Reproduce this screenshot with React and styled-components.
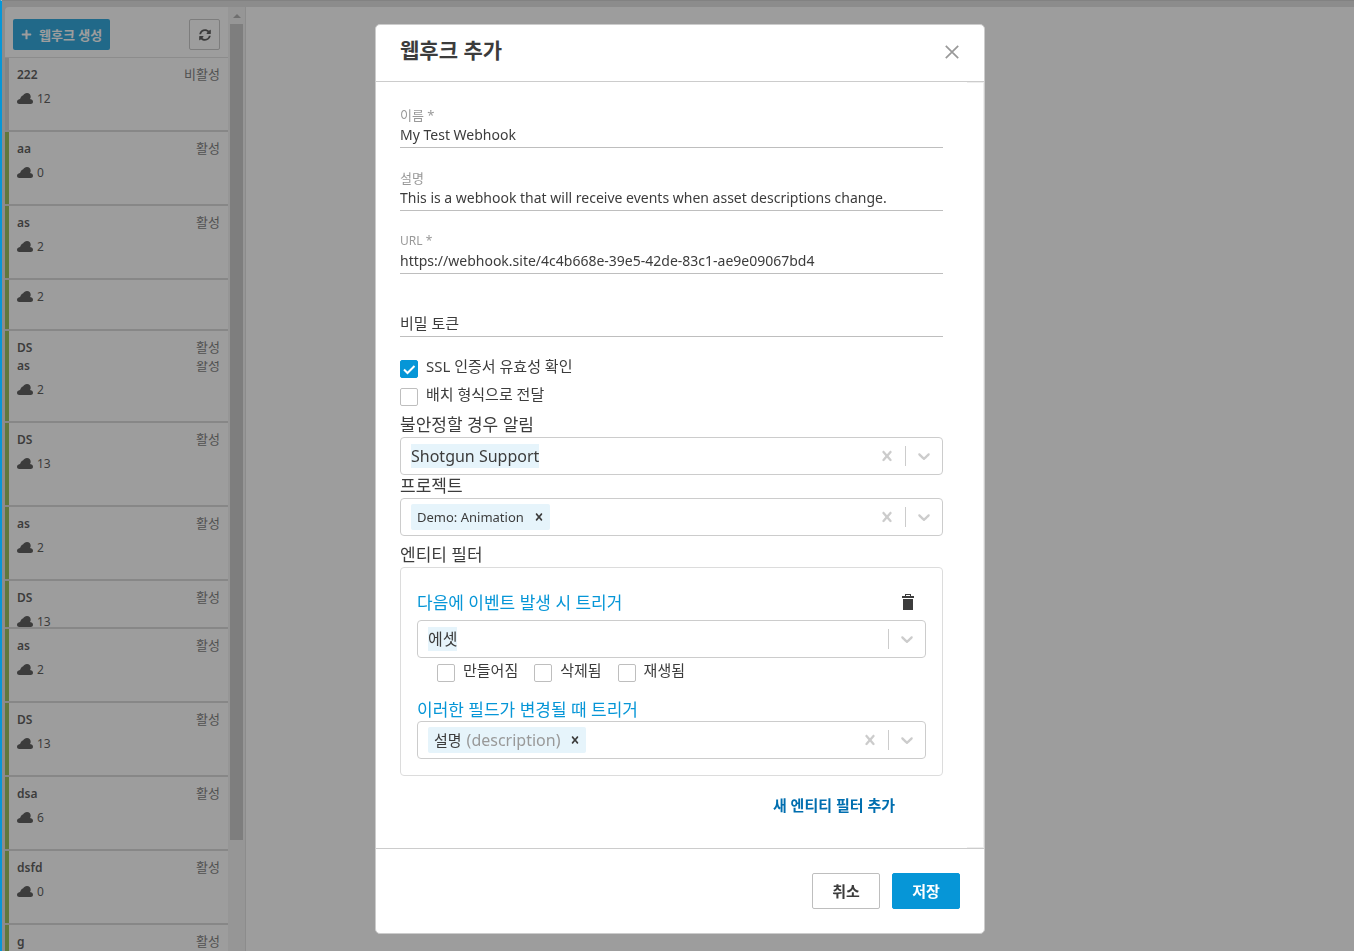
// REACT
import { useState } from "react";

// STYLES
import styled, { createGlobalStyle } from "styled-components";

// ICONS
import { FaPlus, FaSyncAlt } from "react-icons/fa";

const webhooks = [
  { names: ["222"], status: "비활성", count: 12, height: 74, inactive: true },
  { names: ["aa"], status: "활성", count: 0, height: 74 },
  { names: ["as"], status: "활성", count: 2, height: 74 },
  { names: [], status: "", count: 2, height: 51 },
  { names: ["DS", "as"], status: "활성", count: 2, height: 92 },
  { names: ["DS"], status: "활성", count: 13, height: 84 },
  { names: ["as"], status: "활성", count: 2, height: 74 },
  { names: ["DS"], status: "활성", count: 13, height: 48 },
  { names: ["as"], status: "활성", count: 2, height: 74 },
  { names: ["DS"], status: "활성", count: 13, height: 74 },
  { names: ["dsa"], status: "활성", count: 6, height: 74 },
  { names: ["dsfd"], status: "활성", count: 0, height: 74 },
  { names: ["g"], status: "활성", height: 74 },
];

function CloudIcon() {
  return (
    <svg width="16" height="11" viewBox="0 0 16 11" fill="currentColor" aria-hidden="true">
      <path d="M2.4 11C1 11 0 10 0 8.7c0-1.2.8-2 1.8-2.3.8-.2 1.300-.5 1.700-1.500C3.900 3.700 4.600 2.700 6 2.400 6.900.9 8.300 0 10 0c2.200 0 3.700 1.600 3.700 3.700 0 .7-.2 1.200-.5 1.800-.2.4 0 .7.500.8C15 6.500 16 7.400 16 8.700 16 10 15 11 13.700 11z" />
    </svg>
  );
}

function CrossIcon({ size = 20 }) {
  return (
    <svg width={size} height={size} viewBox="0 0 20 20" fill="currentColor" aria-hidden="true">
      <path d="M14.348 14.849c-0.469 0.469-1.229 0.469-1.697 0l-2.651-3.030-2.651 3.029c-0.469 0.469-1.229 0.469-1.697 0-0.469-0.469-0.469-1.229 0-1.697l2.758-3.15-2.759-3.152c-0.469-0.469-0.469-1.228 0-1.697s1.228-0.469 1.697 0l2.652 3.031 2.651-3.031c0.469-0.469 1.228-0.469 1.697 0s0.469 1.229 0 1.697l-2.758 3.152 2.758 3.15c0.469 0.469 0.469 1.229 0 1.698z" />
    </svg>
  );
}

function ChevronIcon() {
  return (
    <svg width="20" height="20" viewBox="0 0 20 20" fill="currentColor" aria-hidden="true">
      <path d="M4.516 7.548c0.436-0.446 1.043-0.481 1.576 0l3.908 3.747 3.908-3.747c0.533-0.481 1.141-0.446 1.574 0 0.436 0.445 0.408 1.197 0 1.615-0.406 0.418-4.695 4.502-4.695 4.502-0.217 0.223-0.502 0.335-0.787 0.335s-0.57-0.112-0.789-0.335c0 0-4.287-4.084-4.695-4.502s-0.436-1.17 0-1.615z" />
    </svg>
  );
}

function TrashIcon() {
  return (
    <svg width="12" height="16" viewBox="0 0 12 16" fill="currentColor" aria-hidden="true">
      <path d="M3 0h6v2h3v2H0V2h3zM4 1v1h4V1z" fillRule="evenodd" />
      <path d="M1 5h10v11H1z" />
    </svg>
  );
}

function CloseIcon() {
  return (
    <svg width="14" height="14" viewBox="0 0 14 14" fill="none" stroke="currentColor" strokeWidth="1.700" aria-hidden="true">
      <path d="M.8.8l12.400 12.400M13.200.8L.8 13.200" />
    </svg>
  );
}

function TextField({ id, label, value, placeholder }) {
  const [text, setText] = useState(value || "");
  return (
    <Field>
      <FieldLabel htmlFor={id} $latin={label === "URL *"}>{label}</FieldLabel>
      <FieldInput
        id={id}
        value={text}
        placeholder={placeholder}
        aria-label={placeholder}
        onChange={(e) => setText(e.target.value)}
      />
    </Field>
  );
}

function CheckField({ label, checked }) {
  return (
    <CheckLabel>
      <CheckBox type="checkbox" defaultChecked={checked} />
      {label}
    </CheckLabel>
  );
}

function SelectField({ id, label, value, chip, note, clearable }) {
  return (
    <SelectBox>
      {chip && (
        <Chip $large={Boolean(note)}>
          {chip}
          {note && <ChipNote>{note}</ChipNote>}
          <ChipRemove type="button" aria-label={`${chip} 제거`}>
            <CrossIcon size={14} />
          </ChipRemove>
        </Chip>
      )}
      {value ? (
        <ValueSelect id={id} aria-label={label}>
          <option>{value}</option>
        </ValueSelect>
      ) : (
        <EmptySelect id={id} aria-label={label} defaultValue="">
          <option value=""></option>
        </EmptySelect>
      )}
      <Indicators>
        {clearable && (
          <Indicator type="button" aria-label="지우기">
            <CrossIcon />
          </Indicator>
        )}
        <Separator />
        <Indicator type="button" aria-label="열기">
          <ChevronIcon />
        </Indicator>
      </Indicators>
    </SelectBox>
  );
}

function WebhookItem({ hook }) {
  return (
    <Item $height={hook.height}>
      <ItemBody $inactive={hook.inactive}>
        {hook.names.map((name, index) => (
          <ItemRow key={name}>
            <ItemName>{name}</ItemName>
            <ItemStatus $clipped={index > 0}>{hook.status}</ItemStatus>
          </ItemRow>
        ))}
        <ItemMeta $spaced={hook.names.length > 0}>
          <CloudIcon />
          <ItemCount>{hook.count}</ItemCount>
        </ItemMeta>
      </ItemBody>
    </Item>
  );
}

export default function App() {
  return (
    <>
      <GlobalStyle />
      <Page>
        <Sidebar>
          <SidebarContent>
            <SidebarHeader>
              <CreateButton type="button">
                <FaPlus size={11} />
                웹후크 생성
              </CreateButton>
              <RefreshButton type="button" aria-label="새로 고침">
                <FaSyncAlt size={12} />
              </RefreshButton>
            </SidebarHeader>
            <List>
              {webhooks.map((hook, index) => (
                <WebhookItem key={index} hook={hook} />
              ))}
            </List>
          </SidebarContent>
          <ScrollTrack>
            <ScrollArrow />
            <ScrollThumb />
          </ScrollTrack>
        </Sidebar>
        <Main />
      </Page>

      <Overlay>
        <Modal role="dialog" aria-labelledby="modal-title">
          <ModalHeader>
            <ModalTitle id="modal-title">웹후크 추가</ModalTitle>
            <CloseButton type="button" aria-label="닫기">
              <CloseIcon />
            </CloseButton>
          </ModalHeader>

          <ModalBody>
            <Form>
              <TextField id="name" label="이름 *" value="My Test Webhook" />
              <TextField
                id="description"
                label="설명"
                value="This is a webhook that will receive events when asset descriptions change."
              />
              <TextField
                id="url"
                label="URL *"
                value="https://webhook.site/4c4b668e-39e5-42de-83c1-ae9e09067bd4"
              />
              <TextField id="token" placeholder="비밀 토큰" />

              <CheckList>
                <CheckField label="SSL 인증서 유효성 확인" checked />
                <CheckField label="배치 형식으로 전달" />
              </CheckList>

              <SelectLabel htmlFor="notify">불안정할 경우 알림</SelectLabel>
              <SelectField id="notify" value="Shotgun Support" clearable />
              <SelectLabel htmlFor="project">프로젝트</SelectLabel>
              <SelectField id="project" chip="Demo: Animation" clearable />

              <FilterTitle>엔티티 필터</FilterTitle>
              <FilterBox>
                <TriggerRow>
                  <TriggerLabel htmlFor="entity">다음에 이벤트 발생 시 트리거</TriggerLabel>
                  <TrashButton type="button" aria-label="필터 삭제">
                    <TrashIcon />
                  </TrashButton>
                </TriggerRow>
                <SelectField id="entity" value="에셋" />
                <EventChecks>
                  <CheckField label="만들어짐" />
                  <CheckField label="삭제됨" />
                  <CheckField label="재생됨" />
                </EventChecks>
                <TriggerLabel htmlFor="fields">이러한 필드가 변경될 때 트리거</TriggerLabel>
                <SelectField id="fields" chip="설명" note="(description)" clearable />
              </FilterBox>

              <AddFilterButton type="button">새 엔티티 필터 추가</AddFilterButton>
            </Form>
            <Gutter />
          </ModalBody>

          <ModalFooter>
            <FooterButton type="button">취소</FooterButton>
            <FooterButton type="button" $primary>
              저장
            </FooterButton>
          </ModalFooter>
        </Modal>
      </Overlay>
    </>
  );
}

const GlobalStyle = createGlobalStyle`
  * {
    box-sizing: border-box;
  }

  body {
    margin: 0;
    overflow: hidden;
    color: #3c3c3c;
    font-family: "Noto Sans", "Noto Sans CJK KR", sans-serif;
    font-size: 14px;
  }

  button, input, select {
    margin: 0;
    padding: 0;
    color: inherit;
    font: inherit;
  }

  button {
    cursor: pointer;
  }
`;

const Page = styled.div`
  display: flex;
  height: 100vh;
  padding: 6px 0 0 3px;
  border-top: 1px solid #c8c8c8;
  border-left: 2px solid #0696d7;
  background: #dcdcdc;
  overflow: hidden;
`;

const Sidebar = styled.aside`
  display: flex;
  flex: none;
  width: 241px;
  border-right: 1px solid #dcdcdc;
  border-radius: 4px 0 0 0;
  background: #ffffff;
  overflow: hidden;
`;

const SidebarContent = styled.div`
  flex: 1;
`;

const SidebarHeader = styled.div`
  display: flex;
  justify-content: space-between;
  height: 51px;
  padding: 12px 8px 0;
  border-bottom: 1px solid #dcdcdc;
`;

const CreateButton = styled.button`
  display: flex;
  align-items: center;
  gap: 7px;
  height: 31px;
  padding: 0 8px;
  border: 0;
  border-radius: 2px;
  background: #0696d7;
  color: #ffffff;
  font-size: 13px;
  font-weight: 600;
  line-height: 16px;
`;

const RefreshButton = styled.button`
  display: flex;
  align-items: center;
  justify-content: center;
  width: 31px;
  height: 31px;
  border: 1px solid #bebebe;
  border-radius: 2px;
  background: transparent;
`;

const List = styled.ul`
  margin: 0;
  padding: 0;
  list-style: none;
`;

const Item = styled.li`
  display: flex;
  height: ${({ $height }) => $height}px;
  border-bottom: 2px solid #d2d2d2;
  overflow: hidden;
`;

const ItemBody = styled.div`
  flex: 1;
  padding: 7px 8px 0;
  border-left: 4px solid ${({ $inactive }) => ($inactive ? "#cccccc" : "#87b340")};
`;

const ItemRow = styled.div`
  display: flex;
  align-items: flex-start;
  justify-content: space-between;
  height: 18px;
  line-height: 18px;
`;

const ItemName = styled.span`
  font-size: 12px;
  font-weight: 600;
  line-height: 20px;
`;

const ItemStatus = styled.span`
  display: flex;
  align-items: flex-end;
  align-self: flex-end;
  height: ${({ $clipped }) => ($clipped ? 13 : 18)}px;
  color: #666666;
  font-size: 13px;
  overflow: hidden;
`;

const ItemMeta = styled.div`
  display: flex;
  align-items: center;
  gap: 4px;
  height: 18px;
  margin-top: ${({ $spaced }) => ($spaced ? 6 : 0)}px;
`;

const ItemCount = styled.span`
  padding-top: 2px;
  font-size: 12px;
  line-height: 18px;
`;

const ScrollTrack = styled.div`
  display: flex;
  flex-direction: column;
  align-items: center;
  width: 17px;
  background: #f1f1f1;

  &::after {
    content: "";
    flex: 3;
  }
`;

const ScrollArrow = styled.div`
  margin: 7px 0 6px;
  border: 4px solid transparent;
  border-top-width: 0;
  border-bottom-color: #a3a3a3;
`;

const ScrollThumb = styled.div`
  flex: 22;
  width: 13px;
  background: #c1c1c1;
`;

const Main = styled.main`
  flex: 1;
  background: #ffffff;
`;

const Overlay = styled.div`
  position: fixed;
  inset: 0 0 0 2px;
  display: flex;
  align-items: flex-start;
  justify-content: center;
  padding: 24px 0 16px 4px;
  background: rgba(60, 60, 60, 0.5);
  overflow: auto;
`;

const Modal = styled.div`
  width: 610px;
  max-width: 100%;
  border: 1px solid #cccccc;
  border-radius: 5px;
  background: #ffffff;
`;

const ModalHeader = styled.header`
  display: flex;
  align-items: center;
  justify-content: space-between;
  height: 57px;
  padding: 0 25px 2px 24px;
  border-bottom: 1px solid #cccccc;
`;

const ModalTitle = styled.h1`
  margin: 0;
  padding-bottom: 4px;
  font-size: 21px;
  font-weight: 600;
  line-height: 28px;
`;

const CloseButton = styled.button`
  display: flex;
  border: 0;
  background: transparent;
  color: #999999;
`;

const ModalBody = styled.div`
  display: flex;
`;

const Form = styled.form`
  display: flex;
  flex: 1;
  flex-direction: column;
  min-width: 0;
  padding: 25px 24px 30px;
`;

const Gutter = styled.div`
  width: 17px;
  border: 1px solid #eeeeee;
  border-left: 0;
`;

const Field = styled.div`
  display: flex;
  flex-direction: column;
  margin-bottom: 22px;
`;

const FieldLabel = styled.label`
  height: 16px;
  color: #999999;
  font-size: ${({ $latin }) => ($latin ? 12 : 13)}px;
  line-height: 16px;
`;

const FieldInput = styled.input`
  height: 25px;
  padding-bottom: 2px;
  border: 0;
  border-bottom: 1px solid #bebebe;
  background: transparent;
  outline: none;

  &::placeholder {
    color: #3c3c3c;
    font-size: 15px;
  }
`;

const CheckList = styled.div`
  display: flex;
  flex-direction: column;
  margin: -4px 0 3px;
`;

const CheckLabel = styled.label`
  display: flex;
  align-items: flex-start;
  gap: 8px;
  height: 28px;
  font-size: 15px;
  line-height: 22px;
`;

const CheckBox = styled.input`
  appearance: none;
  width: 18px;
  height: 18px;
  margin-top: 5px;
  border: 1px solid #bebebe;
  border-radius: 2px;

  &:checked {
    border-color: #0696d7;
    background: #0696d7
      url("data:image/svg+xml,%3Csvg xmlns='http://www.w3.org/2000/svg' viewBox='0 0 18 18' fill='none' stroke='white' stroke-width='2'%3E%3Cpath d='M4 9.500l3.500 3.500L14.500 6'/%3E%3C/svg%3E")
      center / 18px 18px no-repeat;
  }
`;

const SelectLabel = styled.label`
  height: 23px;
  font-size: 17px;
  line-height: 22px;
`;

const SelectBox = styled.div`
  display: flex;
  align-items: center;
  height: 38px;
  padding-left: 10px;
  border: 1px solid #cccccc;
  border-radius: 4px;
`;

const ValueSelect = styled.select`
  appearance: none;
  field-sizing: content;
  height: 24px;
  border: 0;
  background: #e6f4fb;
  font-size: 16px;
  line-height: 24px;
`;

const EmptySelect = styled.select`
  appearance: none;
  flex: 1;
  height: 24px;
  border: 0;
  background: transparent;
`;

const Chip = styled.span`
  display: flex;
  align-items: center;
  height: 26px;
  padding-left: 6px;
  border-radius: 2px;
  background: #e6f4fb;
  font-size: ${({ $large }) => ($large ? 15 : 13)}px;
  line-height: 24px;
`;

const ChipNote = styled.span`
  margin-left: 5px;
  color: #999999;
  font-size: 16px;
`;

const ChipRemove = styled.button`
  display: flex;
  padding: 0 4px;
  margin-left: 4px;
  border: 0;
  background: transparent;
`;

const Indicators = styled.div`
  display: flex;
  align-self: stretch;
  margin-left: auto;
`;

const Indicator = styled.button`
  display: flex;
  align-items: center;
  padding: 0 8px;
  border: 0;
  background: transparent;
  color: #cccccc;
`;

const Separator = styled.span`
  width: 1px;
  margin: 8px 0;
  background: #cccccc;
`;

const FilterTitle = styled.div`
  height: 23px;
  margin-top: 8px;
  font-size: 17px;
  line-height: 22px;
`;

const FilterBox = styled.div`
  padding: 16px;
  border: 1px solid #dcdcdc;
  border-radius: 4px;
`;

const TriggerRow = styled.div`
  display: flex;
  align-items: center;
  justify-content: space-between;
  height: 36px;
  padding-right: 12px;
`;

const TriggerLabel = styled.label`
  display: block;
  height: 24px;
  color: #0696d7;
  font-size: 17px;
  line-height: 26px;
`;

const TrashButton = styled.button`
  display: flex;
  border: 0;
  background: transparent;
`;

const EventChecks = styled.div`
  display: flex;
  gap: 16px;
  height: 39px;
  padding: 1px 0 0 20px;
`;

const AddFilterButton = styled.button`
  align-self: flex-end;
  height: 24px;
  padding-bottom: 2px;
  margin: 18px 48px 0 0;
  border: 0;
  background: transparent;
  color: #006eaf;
  font-size: 15px;
  font-weight: 600;
  line-height: 22px;
`;

const ModalFooter = styled.footer`
  display: flex;
  justify-content: flex-end;
  gap: 12px;
  padding: 24px;
  border-top: 1px solid #cccccc;
`;

const FooterButton = styled.button`
  width: 68px;
  height: 36px;
  padding-bottom: 2px;
  border: 1px solid ${({ $primary }) => ($primary ? "#0696d7" : "#bebebe")};
  border-radius: 2px;
  background: ${({ $primary }) => ($primary ? "#0696d7" : "#ffffff")};
  color: ${({ $primary }) => ($primary ? "#ffffff" : "#3c3c3c")};
  font-size: 15px;
  font-weight: 600;
`;
